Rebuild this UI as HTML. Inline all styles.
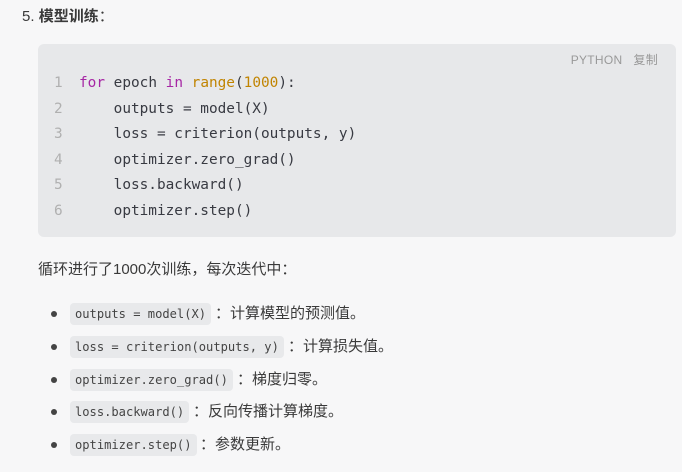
<html><head><style>
body{margin:0;background:#f7f7f8;width:682px;height:472px;overflow:hidden;font-family:"Liberation Sans","Noto Sans CJK SC",sans-serif;color:#3a3a3a;font-size:15px}
.h{position:absolute;left:22px;top:7px;line-height:20px}
.cb{position:absolute;left:38px;top:44px;width:638px;height:193px;background:#e7e8ea;border-radius:6px}
.lab{position:absolute;right:18px;top:7px;font-size:12px;color:#999;letter-spacing:.3px}
pre{position:absolute;left:16px;top:27px;margin:0;font-family:"DejaVu Sans Mono","Liberation Mono",monospace;font-size:14.4px;line-height:25.6px;color:#383a42}
.n{color:#b0b0b0;display:inline-block;width:25px}
.k{color:#a626a4}.b{color:#c18401}
p{position:absolute;left:38px;top:260px;margin:0;line-height:20px}
ul{position:absolute;left:0;top:301px;margin:0;padding:0;list-style:none}
li{position:absolute;left:0;height:22px;line-height:22px;white-space:nowrap}
li:before{content:"";position:absolute;left:51px;top:8px;width:6px;height:6px;border-radius:50%;background:#444}
code{position:absolute;left:70px;top:0;background:#e8e9eb;border-radius:4px;padding:0 5px;font-family:"DejaVu Sans Mono","Liberation Mono",monospace;font-size:12.1px;color:#444;height:22px;line-height:22px}
li span{position:absolute;top:0}
</style></head><body>
<div class="h">5. <b>模型训练</b>：</div>
<div class="cb"><div class="lab">PYTHON &nbsp; 复制</div>
<pre><span class="n">1</span><span class="k">for</span> epoch <span class="k">in</span> <span class="b">range</span>(<span class="b">1000</span>):
<span class="n">2</span>    outputs = model(X)
<span class="n">3</span>    loss = criterion(outputs, y)
<span class="n">4</span>    optimizer.zero_grad()
<span class="n">5</span>    loss.backward()
<span class="n">6</span>    optimizer.step()</pre></div>
<p>循环进行了1000次训练，每次迭代中：</p>
<ul>
<li style="top:2px"><code>outputs = model(X)</code><span style="left:215px">：计算模型的预测值。</span></li>
<li style="top:35px"><code>loss = criterion(outputs, y)</code><span style="left:288px">：计算损失值。</span></li>
<li style="top:68px"><code>optimizer.zero_grad()</code><span style="left:237px">：梯度归零。</span></li>
<li style="top:100px"><code>loss.backward()</code><span style="left:193px">：反向传播计算梯度。</span></li>
<li style="top:133px"><code>optimizer.step()</code><span style="left:200px">：参数更新。</span></li>
</ul>
</body></html>
